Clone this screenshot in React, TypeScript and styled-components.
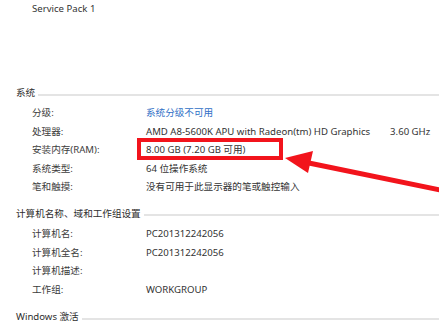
import React from "react";
import styled, { createGlobalStyle } from "styled-components";

const GlobalStyle = createGlobalStyle`
    body {
        margin: 0;
        background: #ffffff;
        font-family: "Noto Sans", "Noto Sans CJK SC", sans-serif;
        color: #333;
    }
`;

const Page = styled.div`
    position: relative;
    width: 439px;
    height: 326px;
    overflow: hidden;
    padding: 1px 0 0 16px;
    box-sizing: border-box;
    font-size: 9.6px;
`;

const Edition = styled.div`
    padding-left: 16px;
    height: 16px;
    line-height: 16px;
`;

const Section = styled.section<{ gap: number }>`
    margin-top: ${(props) => props.gap}px;
`;

const SectionTitle = styled.div`
    display: flex;
    align-items: center;
    height: 18px;
    line-height: 18px;
    color: #2e2e2e;

    &::after {
        content: "";
        flex: 1;
        height: 2px;
        margin-left: 3px;
        margin-top: 3px;
        background: #e4e4e4;
    }
`;

const Rows = styled.div`
    margin-top: 2px;
    padding-left: 16px;
`;

const Row = styled.div`
    display: grid;
    grid-template-columns: 114px auto 1fr;
    height: 18.6px;
    line-height: 18.6px;
    white-space: nowrap;
`;

const Label = styled.span`
    color: #3c3c3c;
`;

const Value = styled.span<{ link?: boolean }>`
    color: ${(props) => (props.link ? "#2f6fc6" : "#333")};
`;

const Extra = styled.span`
    padding-left: 20px;
`;

const Highlight = styled.div`
    position: absolute;
    left: 137px;
    top: 138px;
    width: 146px;
    height: 22px;
    box-sizing: border-box;
    border: 4px solid #f2141c;
`;

const Arrow = styled.svg`
    position: absolute;
    left: 0;
    top: 0;
`;

const systemRows = [
    { label: "分级:", value: "系统分级不可用", link: true },
    { label: "处理器:", value: "AMD A8-5600K APU with Radeon(tm) HD Graphics", extra: "3.60 GHz" },
    { label: "安装内存(RAM):", value: "8.00 GB (7.20 GB 可用)" },
    { label: "系统类型:", value: "64 位操作系统" },
    { label: "笔和触摸:", value: "没有可用于此显示器的笔或触控输入" },
];

const nameRows = [
    { label: "计算机名:", value: "PC201312242056" },
    { label: "计算机全名:", value: "PC201312242056" },
    { label: "计算机描述:", value: "" },
    { label: "工作组:", value: "WORKGROUP" },
];

type RowData = { label: string; value: string; link?: boolean; extra?: string };

function InfoRows({ rows }: { rows: RowData[] }) {
    return (
        <Rows>
            {rows.map((row) => (
                <Row key={row.label}>
                    <Label>{row.label}</Label>
                    <Value link={row.link}>{row.value}</Value>
                    {row.extra && <Extra>{row.extra}</Extra>}
                </Row>
            ))}
        </Rows>
    );
}

export default function App() {
    return (
        <>
            <GlobalStyle />
            <Page>
                <Edition>Service Pack 1</Edition>

                <Section gap={67}>
                    <SectionTitle>系统</SectionTitle>
                    <InfoRows rows={systemRows} />
                </Section>

                <Section gap={8}>
                    <SectionTitle>计算机名称、域和工作组设置</SectionTitle>
                    <InfoRows rows={nameRows} />
                </Section>

                <Section gap={9}>
                    <SectionTitle>Windows 激活</SectionTitle>
                </Section>

                <Highlight />
                <Arrow width="439" height="326" viewBox="0 0 439 326">
                    <line x1="304" y1="162" x2="445" y2="191" stroke="#f2141c" strokeWidth="5" />
                    <polygon points="285,158 313,151 308,173" fill="#f2141c" />
                </Arrow>
            </Page>
        </>
    );
}
